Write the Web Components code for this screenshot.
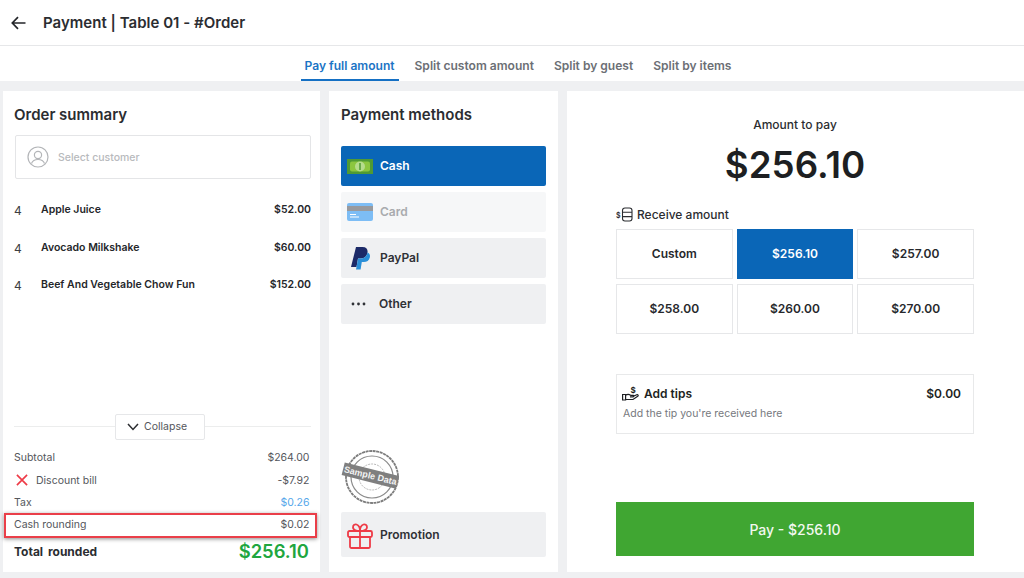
<!DOCTYPE html>
<html>
<head>
<meta charset="utf-8">
<title>Payment</title>
<style>
html, body { margin: 0; padding: 0; }
body { width: 1024px; height: 578px; overflow: hidden; background: #eff0f2; font-family: Inter, "Liberation Sans", sans-serif; color: #212529; }
</style>
</head>
<body>
<pay-page></pay-page>

<script>
function define(name, css, html, setup) {
  customElements.define(name, class extends HTMLElement {
    constructor() {
      super()
      this.attachShadow({ mode: 'open' }).innerHTML = '<style>' + css + '</style>' + html
    }
    connectedCallback() {
      if (setup) setup.call(this, this.shadowRoot)
    }
  })
}

define('pay-header', `
:host { display: flex; align-items: center; height: 45px; background: #fff; border-bottom: 1px solid #e6e7e9; padding-left: 11px; gap: 17px; box-sizing: content-box; }
svg { display: block; }
h1 { margin: 0; font-size: 15px; font-weight: 600; color: #2b2d31; letter-spacing: .02px; }
`, `
<svg width="15" height="14" viewBox="0 0 15 14" fill="none" stroke="#24262a" stroke-width="1.7"><path d="M14.5 7H1.5M7 1.2L1.3 7L7 12.8"/></svg>
<h1>Payment | Table 01 - #Order</h1>
`)

define('pay-tabs', `
:host { display: flex; justify-content: center; height: 35px; background: #fff; padding-left: 12px; gap: 0; }
a { display: block; padding: 11.5px 4px 0; height: 23.5px; font-size: 12.05px; font-weight: 600; color: #6c6f75; margin-right: 12px; white-space: nowrap; line-height: 15px; }
a.on { color: #1b74c5; border-bottom: 2px solid #1570c4; height: 21.5px; margin-right: 12px; }
`, `
<a class="on">Pay full amount</a><a>Split custom amount</a><a>Split by guest</a><a style="margin-right:0">Split by items</a>
`)

define('order-item', `
:host { display: flex; align-items: flex-start; height: 37.5px; font-size: 10.5px; font-weight: 600; color: #24262a; line-height: 16px; }
.q { width: 27px; font-size: 12px; font-weight: 400; color: #3c3e42; line-height: 18px; padding-top: 0; }
.n { flex: 1; }
`, `<span class="q"></span><span class="n"></span><span class="p"></span>`, function (r) {
  r.querySelector('.q').textContent = this.getAttribute('qty')
  r.querySelector('.n').textContent = this.getAttribute('name')
  r.querySelector('.p').textContent = this.getAttribute('price')
})

define('summary-row', `
:host { display: flex; align-items: center; justify-content: space-between; height: 22.3px; font-size: 10.5px; color: #54565b; position: relative; }
.l { display: flex; align-items: center; }
:host([flag]) svg { display: block; margin: 0 8px 0 2px; }
svg { display: none; }
:host([tax]) .v { color: #55a7ea; }
.v { margin-right: 1.5px; }
.mark { display: none; position: absolute; left: -10px; right: -6px; top: -1px; bottom: -2px; border: 2px solid #ea3f49; box-shadow: 0 1px 4px rgba(0,0,0,.45); pointer-events: none; }
:host([mark]) .mark { display: block; }
:host([mark]) .l, :host([mark]) .v { position: relative; top: -.5px; }
`, `
<span class="l"><svg width="12" height="12" viewBox="0 0 13 13" stroke="#ee3b47" stroke-width="1.8" fill="none"><path d="M1 1l11 11M12 1L1 12"/></svg><span class="t"></span></span><span class="v"></span><span class="mark"></span>
`, function (r) {
  r.querySelector('.t').textContent = this.getAttribute('label')
  r.querySelector('.v').textContent = this.getAttribute('value')
})

define('order-summary', `
:host { display: flex; flex-direction: column; width: 317px; height: 481px; box-sizing: border-box; background: #fff; padding: 15px 9px 7px 11px; }
h2 { margin: 0; font-size: 15px; line-height: 18px; font-weight: 600; color: #2b2d31; }
.cust { display: flex; align-items: center; height: 42px; margin: 11px 0 0 1px; border: 1px solid #e4e5e7; border-radius: 2px; padding-left: 11px; gap: 9px; font-size: 10.5px; font-weight: 500; color: #b8babd; }
.cust svg { display: block; }
.items { margin-top: 23px; flex: 1; }
.coll { display: flex; align-items: center; height: 26px; }
.coll i { flex: 1; height: 1px; background: #eceded; }
.coll i:first-child { flex: 0 0 101px; }
.coll div { display: flex; align-items: center; gap: 5px; width: 90px; height: 26px; box-sizing: border-box; padding-left: 11px; border: 1px solid #e6e7e9; border-radius: 2px; font-size: 10.5px; color: #54565b; }
.rows { margin-top: 7px; }
.total { display: flex; align-items: center; justify-content: space-between; height: 28px; margin-top: 1px; font-size: 12px; font-weight: 700; color: #2b2d31; word-spacing: 2px; }
.total b { font-size: 18.4px; font-weight: 600; color: #20a63f; word-spacing: 0; margin-right: 2px; }
`, `
<h2>Order summary</h2>
<div class="cust">
  <svg width="22" height="22" viewBox="0 0 22 22" fill="none" stroke="#b3b5b8" stroke-width="1.2"><circle cx="11" cy="11" r="10"/><circle cx="11" cy="9" r="3.6"/><path d="M4.5 17.5c1-2.8 3.5-4 6.5-4s5.500 1.200 6.500 4"/></svg>
  Select customer
</div>
<div class="items">
  <order-item qty="4" name="Apple Juice" price="$52.00"></order-item>
  <order-item qty="4" name="Avocado Milkshake" price="$60.00"></order-item>
  <order-item qty="4" name="Beef And Vegetable Chow Fun" price="$152.00"></order-item>
</div>
<div class="coll"><i></i><div><svg width="12" height="8" viewBox="0 0 12 8" fill="none" stroke="#2b2d31" stroke-width="1.500"><path d="M1 1l5 5.500L11 1"/></svg>Collapse</div><i></i></div>
<div class="rows">
  <summary-row label="Subtotal" value="$264.00"></summary-row>
  <summary-row flag label="Discount bill" value="-$7.92"></summary-row>
  <summary-row tax label="Tax" value="$0.26"></summary-row>
  <summary-row mark label="Cash rounding" value="$0.02"></summary-row>
</div>
<div class="total"><span>Total rounded</span><b>$256.10</b></div>
`)

define('method-button', `
:host { display: flex; align-items: center; height: 40px; box-sizing: border-box; padding-bottom: 2px; background: #eff0f2; border-radius: 2px; padding-left: 6px; gap: 7px; font-size: 12px; font-weight: 600; color: #2f3136; margin-bottom: 6px; }
:host([on]) { background: #0a66b7; color: #fff; }
:host([off]) { background: #f6f7f8; color: #a9abae; }
.ic { width: 26px; height: 26px; display: flex; align-items: center; justify-content: center; position: relative; top: 1px; }
svg { display: block; }
`, `<span class="ic"><slot name="icon"></slot></span><slot></slot>`)

define('payment-methods', `
:host { display: flex; flex-direction: column; width: 229px; height: 481px; box-sizing: border-box; background: #fff; padding: 15px 12px 15px; }
h2 { margin: 0 0 22px; font-size: 15px; line-height: 18px; font-weight: 600; color: #2b2d31; }
.stamp { margin-top: auto; margin-bottom: 8px; display: block; }
.promo { height: 45px; margin-bottom: 0; padding-bottom: 0; }
`, `
<h2>Payment methods</h2>
<method-button on><svg slot="icon" width="26" height="15" viewBox="0 0 26 15"><rect width="26" height="15" fill="#4f9a34"/><rect x="3" y="2.500" width="20" height="10" rx="2" fill="#8cc63f"/><circle cx="13" cy="7.500" r="5" fill="#b6dc8c"/><path d="M13 4v7" stroke="#4f9a34" stroke-width="1.500"/></svg>Cash</method-button>
<method-button off><svg slot="icon" width="26" height="18" viewBox="0 0 26 18"><rect width="26" height="18" rx="2" fill="#7dbdf5"/><rect y="3" width="26" height="5" fill="#989a9e"/><path d="M3 11.500h6M3 14h9" stroke="#fff" stroke-width="1"/></svg>Card</method-button>
<method-button><svg slot="icon" width="19" height="23" viewBox="0 0 19 23"><path d="M5 0h6.500c4 0 5.500 2.500 5 5.500-.7 4-3.500 6-7 6H7L5.500 20H0z" fill="#1c2a68"/><path d="M16.800 5.500c2 1 2.500 3 2 5-.7 3-3 4.500-6 4.500h-2l-1.200 7.500H5L5.500 20l1.500-8.500h2.500c3.500 0 6.300-2 7-6z" fill="#2a8fd8"/></svg>PayPal</method-button>
<method-button><svg slot="icon" width="15" height="4" viewBox="0 0 15 4" style="margin-left:-3px"><circle cx="2" cy="2" r="1.400" fill="#2f3136"/><circle cx="7.500" cy="2" r="1.400" fill="#2f3136"/><circle cx="13" cy="2" r="1.400" fill="#2f3136"/></svg><span style="margin-left:-1px">Other</span></method-button>
<svg class="stamp" width="58" height="54" viewBox="0 0 58 54">
  <circle cx="31" cy="27" r="26" fill="#fff" stroke="#7c7c7c" stroke-width="1.800" stroke-dasharray="3 .6"/>
  <circle cx="31" cy="27" r="21" fill="none" stroke="#8a8a8a" stroke-width="1.200"/>
  <circle cx="31" cy="27" r="13" fill="none" stroke="#9a9a9a" stroke-width=".7" stroke-dasharray="2 1"/>
  <g transform="rotate(14 29 27)">
    <rect x="1" y="19" width="56" height="13" fill="#7f7f7f"/>
    <text x="29" y="28.600" font-family="'Liberation Sans', sans-serif" font-size="9" font-weight="700" fill="#f2f2f2" text-anchor="middle">Sample Data</text>
  </g>
</svg>
<method-button class="promo"><svg slot="icon" width="26" height="26" viewBox="0 0 26 26" fill="none" stroke="#ee3b47" stroke-width="1.800" stroke-linejoin="round"><rect x="1" y="8" width="24" height="6" rx="1.500"/><path d="M3 14v9.500a1.500 1.500 0 0 0 1.500 1.500h17a1.500 1.500 0 0 0 1.500-1.500V14M13 8v17M13 8C10 8 6 7.500 6 4.300 6 2 8 1 9.500 1.500 11.500 2.200 13 5 13 8zM13 8c3 0 7-.5 7-3.700C20 2 18 1 16.500 1.500 14.500 2.200 13 5 13 8z"/></svg>Promotion</method-button>
`)

define('amount-button', `
:host { display: flex; align-items: center; justify-content: center; height: 50px; box-sizing: border-box; padding-bottom: 1px; border: 1px solid #e6e7e9; font-size: 12px; font-weight: 600; color: #26282c; background: #fff; }
:host([on]) { background: #0a66b7; border-color: #0a66b7; color: #fff; }
`, `<slot></slot>`)

define('amount-panel', `
:host { display: flex; flex-direction: column; flex: 1; height: 481px; box-sizing: border-box; background: #fff; padding: 26px 50px 16px 49px; color: #212529; }
.lbl { text-align: center; font-size: 12px; font-weight: 500; line-height: 16px; color: #2b2d31; }
.big { text-align: center; font-size: 36.700px; font-weight: 600; line-height: 44px; margin-top: 10px; color: #1d1f22; }
.rec { display: flex; align-items: center; gap: 4px; margin-top: 19px; height: 16px; font-size: 12px; font-weight: 500; color: #2b2d31; }
.rec svg { display: block; }
.grid { display: grid; grid-template-columns: repeat(3, 1fr); gap: 5px 4px; margin-top: 7px; }
.tips { margin-top: 40px; height: 60px; box-sizing: border-box; border: 1px solid #e8e9ea; padding: 11px 12px 0 5px; }
.tips .top { display: flex; align-items: center; font-size: 12px; font-weight: 600; color: #1d1f22; }
.tips svg { display: block; margin-right: 5px; }
.tips span { flex: 1; }
.tips .sub { font-size: 10.500px; color: #76787d; margin: 6px 0 0 1px; line-height: 14px; }
.pay { margin-top: auto; height: 54px; display: flex; align-items: center; justify-content: center; background: #40a632; color: #f2f8f0; font-size: 14px; font-weight: 500; }
`, `
<div class="lbl">Amount to pay</div>
<div class="big">$256.10</div>
<div class="rec">
  <svg width="17" height="15" viewBox="0 0 17 15" fill="none" stroke="#2b2d31" stroke-width="1.100"><text x="0" y="10.500" font-size="7" font-family="Inter, sans-serif" font-weight="600" fill="#2b2d31" stroke="none">$</text><rect x="6.500" y="1" width="9.500" height="13" rx="2.500"/><path d="M6.500 5.300h9.500M6.500 9.600h9.500"/></svg>
  Receive amount
</div>
<div class="grid">
  <amount-button>Custom</amount-button>
  <amount-button on>$256.10</amount-button>
  <amount-button>$257.00</amount-button>
  <amount-button>$258.00</amount-button>
  <amount-button>$260.00</amount-button>
  <amount-button>$270.00</amount-button>
</div>
<div class="tips">
  <div class="top">
    <svg width="17" height="15" viewBox="0 0 17 15" fill="none" stroke="#1d1f22" stroke-width="1.200"><text x="8.500" y="6.500" font-size="8" font-family="Inter, sans-serif" font-weight="700" fill="#1d1f22" stroke="none">$</text><path d="M.6 8.500h3v5.500h-3zM3.600 9.300c2-1.300 3.500-1 5 0h2.500c1 0 1 1.500 0 1.500H8M11 10.500l3.700-1.700c1.200-.5 2 .7 1 1.500l-4.700 3.200H3.600"/></svg>
    <span>Add tips</span>$0.00
  </div>
  <div class="sub">Add the tip you're received here</div>
</div>
<div class="pay">Pay - $256.10</div>
`)

define('pay-page', `
:host { display: block; width: 1024px; height: 578px; }
.cols { display: flex; gap: 9px; padding: 10px 0 0 3px; }
`, `
<pay-header></pay-header>
<pay-tabs></pay-tabs>
<div class="cols">
  <order-summary></order-summary>
  <payment-methods></payment-methods>
  <amount-panel></amount-panel>
</div>
`)
</script>
</body>
</html>
